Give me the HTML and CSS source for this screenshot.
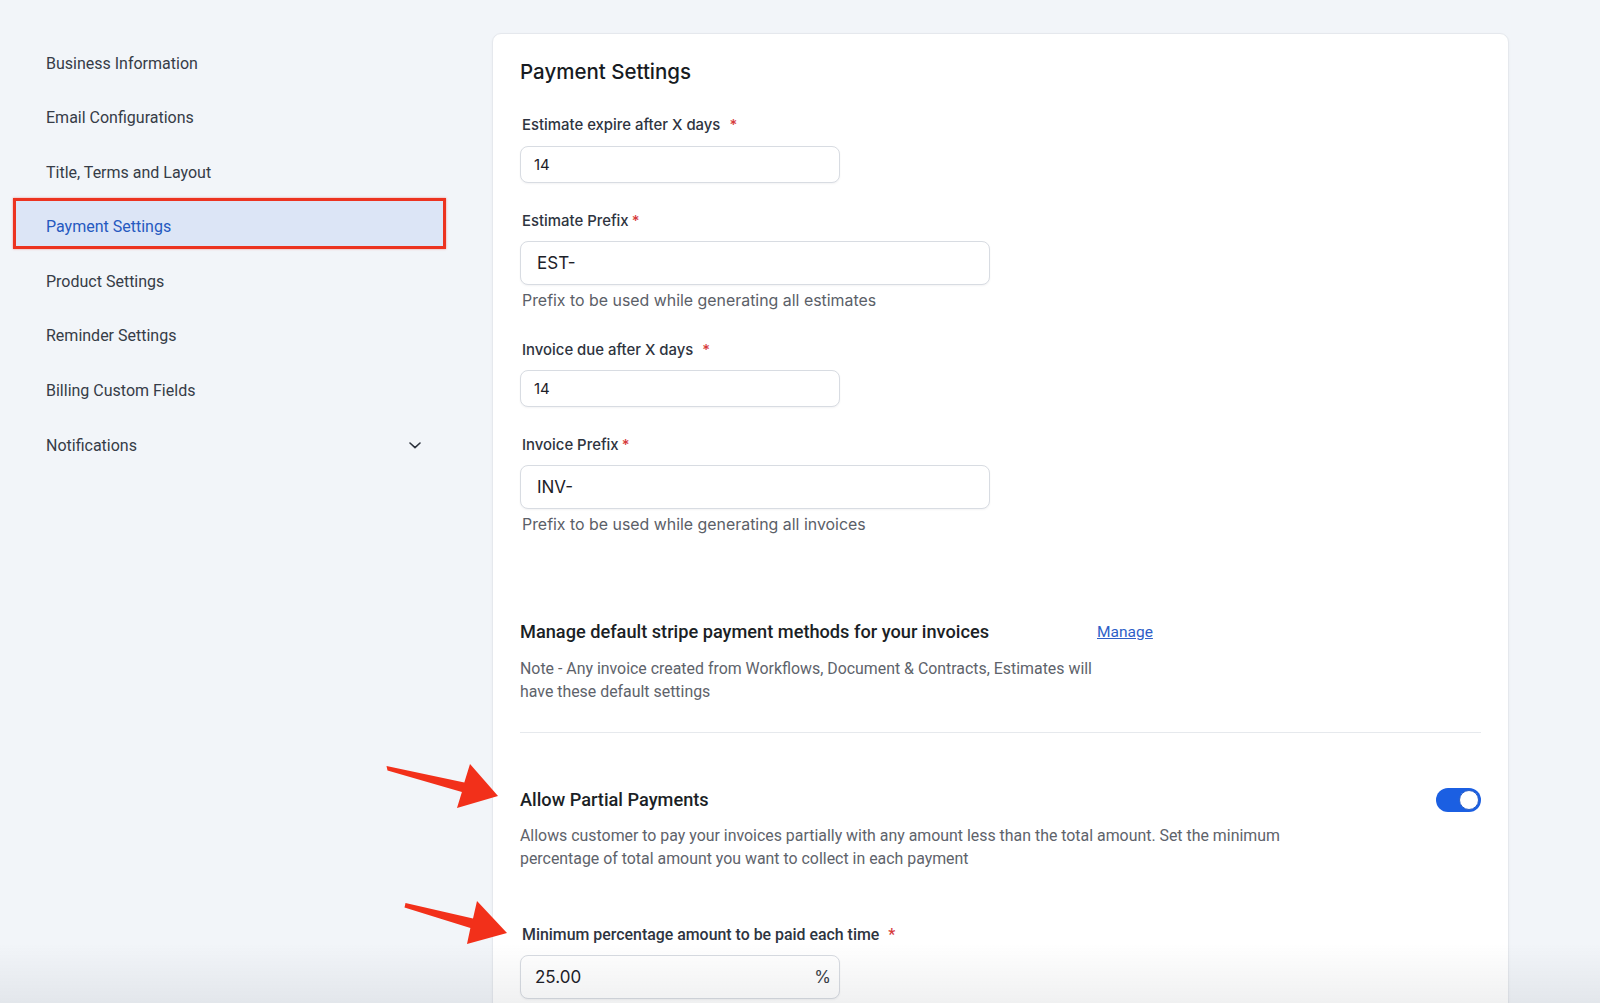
FILE: index.html
```html
<!DOCTYPE html>
<html lang="en">
<head>
  <meta charset="UTF-8">
  <title>Payment Settings</title>
  <link rel="stylesheet" href="styles.css">
</head>
<body>
  <div class="layout">
    <!-- Settings menu -->
    <ul class="side-menu">
      <li><a href="#">Business Information</a></li>
      <li><a href="#">Email Configurations</a></li>
      <li><a href="#">Title, Terms and Layout</a></li>
      <li><a href="#" class="active">Payment Settings</a></li>
      <li><a href="#">Product Settings</a></li>
      <li><a href="#">Reminder Settings</a></li>
      <li><a href="#">Billing Custom Fields</a></li>
      <li>
        <a href="#" class="has-sub">Notifications
          <svg class="chevron" width="12" height="7" viewBox="0 0 12 7"><path d="M1 1l5 4.6L11 1" fill="none" stroke="#2d333d" stroke-width="1.6" stroke-linecap="round" stroke-linejoin="round"/></svg>
        </a>
      </li>
    </ul>

    <!-- Main card -->
    <div class="card">
      <h1 class="card-title">Payment Settings</h1>

      <label class="field-label first">Estimate expire after X days <span class="req">*</span></label>
      <div class="input small"><span>14</span></div>

      <label class="field-label">Estimate Prefix<span class="req tight">*</span></label>
      <div class="input wide"><span>EST-</span></div>
      <p class="hint">Prefix to be used while generating all estimates</p>

      <label class="field-label">Invoice due after X days <span class="req">*</span></label>
      <div class="input small"><span>14</span></div>

      <label class="field-label">Invoice Prefix<span class="req tight">*</span></label>
      <div class="input wide"><span>INV-</span></div>
      <p class="hint">Prefix to be used while generating all invoices</p>

      <div class="stripe-row">
        <div class="stripe-text">
          <h2 class="section-title">Manage default stripe payment methods for your invoices</h2>
          <p class="note">Note - Any invoice created from Workflows, Document &amp; Contracts, Estimates will have these default settings</p>
        </div>
        <a href="#" class="manage-link">Manage</a>
      </div>

      <div class="divider"></div>

      <div class="toggle-row">
        <h2 class="section-title">Allow Partial Payments</h2>
        <span class="toggle"><span class="knob"></span></span>
      </div>
      <p class="note desc">Allows customer to pay your invoices partially with any amount less than the total amount. Set the minimum percentage of total amount you want to collect in each payment</p>

      <label class="field-label roboto">Minimum percentage amount to be paid each time <span class="req">*</span></label>
      <div class="input small percent"><span>25.00</span><span class="suffix">%</span></div>
    </div>
  </div>

  <!-- red annotation arrows -->
  <svg class="arrows" width="1600" height="1003" viewBox="0 0 1600 1003">
    <polygon points="386.5,766 464.3,782.4 470,764 498,796 457,808 461.9,792 387.5,770.5" fill="#f2301a"/>
    <polygon points="405.5,903 473,918.5 477,901 507,933 467,944 470.4,928.1 404.5,907.5" fill="#f2301a"/>
  </svg>
</body>
</html>
```

FILE: styles.css
```css
/* ====== RESET ====== */
* {
  margin: 0;
  padding: 0;
  box-sizing: border-box;
}
ul {
  list-style: none;
}

body {
  font-family: Roboto, "Liberation Sans", sans-serif;
  background-color: #f2f5f9;
  height: 100vh;
  overflow: hidden;
}
/* faint fade at the bottom of the capture */
body::after {
  content: "";
  position: fixed;
  left: 0;
  right: 0;
  bottom: 0;
  height: 60px;
  background: linear-gradient(to bottom, rgba(0,0,0,0), rgba(40,50,60,0.07));
  pointer-events: none;
}

.layout {
  display: flex;
  align-items: flex-start;
  padding-left: 13px;
  height: 1003px;
  overflow: hidden;
}

/* ====== SIDE MENU ====== */
.side-menu {
  width: 433px;
  margin-right: 46px;
  padding-top: 34.5px;
  display: flex;
  flex-direction: column;
  gap: 3.6px;
}
.side-menu a {
  display: flex;
  align-items: center;
  justify-content: space-between;
  height: 51px;
  padding: 6px 22px 0 30px;
  font-size: 16px;
  color: #363c47;
  text-decoration: none;
  border: 3px solid transparent;
}
.side-menu a.active {
  background-color: #dce5f6;
  color: #2559c0;
  border-color: #ec3320;
  box-shadow: 0 0 2px rgba(236,51,32,0.5);
}
.chevron {
  margin-top: 0;
}

/* ====== CARD ====== */
.card {
  width: 1017px;
  margin-top: 33px;
  min-height: 1100px;
  background-color: #fff;
  border: 1px solid #e5e8ed;
  border-radius: 9px;
  box-shadow: 0 1px 3px rgba(0,0,0,0.04);
  padding: 24px 27px 0 27px;
  display: flex;
  flex-direction: column;
  align-items: flex-start;
}
.card-title {
  font-family: Inter, sans-serif;
  font-size: 20.5px;
  font-weight: 500;
  line-height: 28px;
  color: #171b22;
}

.field-label {
  display: block;
  font-family: Inter, sans-serif;
  font-size: 14.9px;
  font-weight: 500;
  line-height: 20px;
  color: #2e3440;
  padding-left: 2px;
  margin-top: 28px;
  margin-bottom: 10px;
}
.field-label.first {
  margin-top: 29px;
  margin-bottom: 11px;
}
.field-label.roboto {
  font-family: Roboto, sans-serif;
  font-size: 15.9px;
  margin-top: 55px;
  margin-bottom: 10px;
}
.req {
  color: #d63a3a;
  margin-left: 5px;
}
.req.tight {
  margin-left: 3px;
}

.input {
  display: flex;
  align-items: center;
  justify-content: space-between;
  background-color: #fff;
  border: 1px solid #d8dce2;
  border-radius: 8px;
  box-shadow: 0 1px 2px rgba(16,24,40,0.05);
  font-family: Inter, sans-serif;
  color: #1d2128;
}
.input.small {
  width: 320px;
  height: 37px;
  padding: 0 8px 0 13px;
  font-size: 15px;
}
.input.wide {
  width: 470px;
  height: 44px;
  padding: 0 16px;
  font-size: 17px;
}
.input.percent {
  height: 44px;
  padding-left: 14px;
  font-size: 17px;
}
.suffix {
  color: #3a3f48;
}

.hint {
  font-family: Inter, sans-serif;
  font-size: 15.9px;
  line-height: 22px;
  color: #5b6068;
  padding-left: 2px;
  margin-top: 5px;
}

/* ====== STRIPE SECTION ====== */
.stripe-row {
  display: flex;
  align-items: flex-start;
  margin-top: 84px;
}
.stripe-text {
  width: 577px;
}
.section-title {
  font-family: Roboto, sans-serif;
  font-size: 18.2px;
  font-weight: 500;
  line-height: 24px;
  color: #1b1f26;
}
.note {
  font-family: Roboto, sans-serif;
  font-size: 15.9px;
  line-height: 23px;
  color: #5e636b;
  margin-top: 12.5px;
}
.manage-link {
  font-size: 15.5px;
  line-height: 24px;
  color: #2e5fc8;
  text-decoration: underline;
}

.divider {
  align-self: stretch;
  height: 1px;
  background-color: #e6e9ed;
  margin-top: 29.5px;
}

/* ====== PARTIAL PAYMENTS ====== */
.toggle-row {
  align-self: stretch;
  display: flex;
  align-items: center;
  justify-content: space-between;
  margin-top: 55px;
}
.toggle {
  display: flex;
  align-items: center;
  justify-content: flex-end;
  width: 45px;
  height: 24px;
  padding: 0 2px;
  border-radius: 12px;
  background-color: #1b5fe2;
}
.knob {
  width: 20px;
  height: 20px;
  border-radius: 50%;
  background-color: #fff;
  border: 1px solid #2a5fc8;
}
.note.desc {
  max-width: 775px;
  font-size: 15.9px;
  margin-top: 11.5px;
}

/* ====== ANNOTATIONS ====== */
.arrows {
  position: absolute;
  top: 0;
  left: 0;
  pointer-events: none;
}
```
